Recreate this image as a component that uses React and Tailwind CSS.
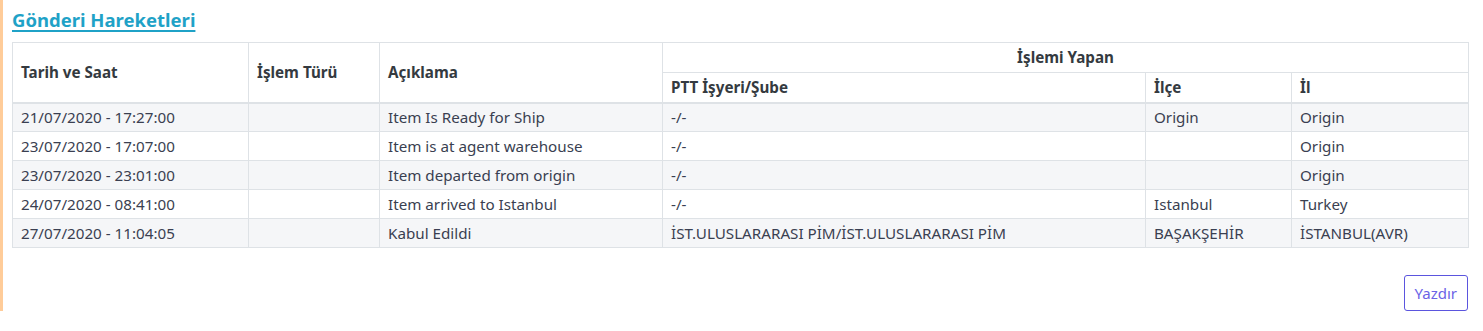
import React from 'react';

const rows = [
    { date: '21/07/2020 - 17:27:00', type: '', desc: 'Item Is Ready for Ship', office: '-/-', district: 'Origin', city: 'Origin' },
    { date: '23/07/2020 - 17:07:00', type: '', desc: 'Item is at agent warehouse', office: '-/-', district: '', city: 'Origin' },
    { date: '23/07/2020 - 23:01:00', type: '', desc: 'Item departed from origin', office: '-/-', district: '', city: 'Origin' },
    { date: '24/07/2020 - 08:41:00', type: '', desc: 'Item arrived to Istanbul', office: '-/-', district: 'Istanbul', city: 'Turkey' },
    { date: '27/07/2020 - 11:04:05', type: '', desc: 'Kabul Edildi', office: 'İST.ULUSLARARASI PİM/İST.ULUSLARARASI PİM', district: 'BAŞAKŞEHİR', city: 'İSTANBUL(AVR)' },
];

export default function App() {
    const th = "border border-[#dee2e6] px-[8px] font-bold text-[#343a40]";
    const td = "border border-[#dee2e6] px-[8px] h-[29px] align-middle whitespace-nowrap";

    return (
        <div className="h-[331px] bg-white font-['Noto_Sans','Open_Sans',sans-serif] text-[15.2px] text-[#3a3f51]">
            <div className="h-[311px] border-l-[3px] border-[#ffcc99] pl-[9px] pr-[16px] pt-[7px] flex flex-col">
                <h2 className="text-[18.5px] leading-[26px] font-bold text-[#1fa2c7] underline underline-offset-[3px] decoration-[2px] w-fit">
                    Gönderi Hareketleri
                </h2>

                <table className="mt-[9px] w-[1456px] table-fixed border-collapse">
                    <colgroup>
                        <col className="w-[236px]" />
                        <col className="w-[131px]" />
                        <col className="w-[283px]" />
                        <col className="w-[483px]" />
                        <col className="w-[146px]" />
                        <col className="w-[177px]" />
                    </colgroup>
                    <thead>
                        <tr className="h-[30px]">
                            <th rowSpan={2} className={`${th} text-left border-b-2`}>Tarih ve Saat</th>
                            <th rowSpan={2} className={`${th} text-left border-b-2`}>İşlem Türü</th>
                            <th rowSpan={2} className={`${th} text-left border-b-2`}>Açıklama</th>
                            <th colSpan={3} className={`${th} text-center`}>İşlemi Yapan</th>
                        </tr>
                        <tr className="h-[30px]">
                            <th className={`${th} text-left border-b-2`}>PTT İşyeri/Şube</th>
                            <th className={`${th} text-left border-b-2`}>İlçe</th>
                            <th className={`${th} text-left border-b-2`}>İl</th>
                        </tr>
                    </thead>
                    <tbody>
                        {rows.map((r, i) => (
                            <tr key={i} className={i % 2 === 0 ? 'bg-[#f5f6f8]' : 'bg-white'}>
                                <td className={td}>{r.date}</td>
                                <td className={td}>{r.type}</td>
                                <td className={td}>{r.desc}</td>
                                <td className={td}>{r.office}</td>
                                <td className={td}>{r.district}</td>
                                <td className={td}>{r.city}</td>
                            </tr>
                        ))}
                    </tbody>
                </table>

                <div className="mt-auto flex justify-end w-[1456px]">
                    <button className="h-[36px] px-[10px] border border-[#5b55de] rounded-[3px] text-[15px] text-[#6b63e6] bg-white">
                        Yazdır
                    </button>
                </div>
            </div>
        </div>
    );
}
